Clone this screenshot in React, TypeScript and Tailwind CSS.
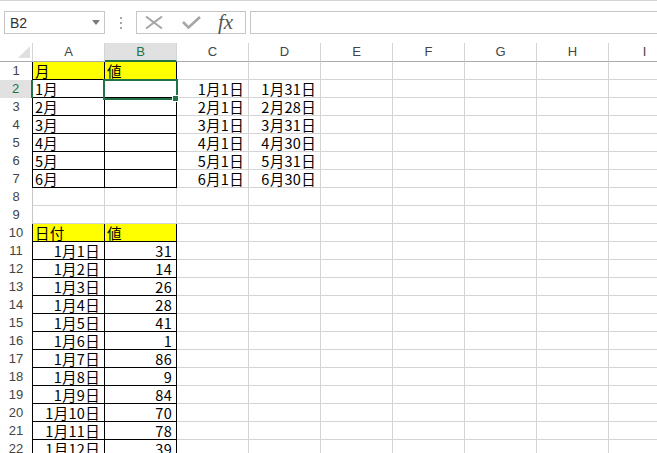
import React from "react";

const COLS = ["A", "B", "C", "D", "E", "F", "G", "H", "I"];
const ROWS = Array.from({ length: 22 }, (_, i) => i + 1);

const months = ["1月", "2月", "3月", "4月", "5月", "6月"];
const monthStart = ["1月1日", "2月1日", "3月1日", "4月1日", "5月1日", "6月1日"];
const monthEnd = ["1月31日", "2月28日", "3月31日", "4月30日", "5月31日", "6月30日"];
const values = [31, 14, 26, 28, 41, 1, 86, 9, 84, 70, 78, 39];

type Cell = { text?: string; right?: boolean; yellow?: boolean };

function isTable(r: number, c: number) {
  return c < 2 && ((r >= 1 && r <= 7) || r >= 10);
}

function getCell(r: number, c: number): Cell {
  if (r === 1 && c === 0) return { text: "月", yellow: true };
  if (r === 1 && c === 1) return { text: "値", yellow: true };
  if (r === 10 && c === 0) return { text: "日付", yellow: true };
  if (r === 10 && c === 1) return { text: "値", yellow: true };
  if (r >= 2 && r <= 7) {
    if (c === 0) return { text: months[r - 2] };
    if (c === 2) return { text: monthStart[r - 2], right: true };
    if (c === 3) return { text: monthEnd[r - 2], right: true };
  }
  if (r >= 11) {
    if (c === 0) return { text: `1月${r - 10}日`, right: true };
    if (c === 1) return { text: String(values[r - 11]), right: true };
  }
  return {};
}

function FormulaBar() {
  return (
    <div className="h-[43px] border-t border-[#d4d4d4] pt-[10px] flex items-start">
      <div className="ml-[4px] w-[101px] h-[23px] border border-[#c6c6c6] flex items-center justify-between pl-[5px] pr-[4px]">
        <span className="text-[14px] leading-none text-[#333] [font-family:'Liberation_Sans',sans-serif]">B2</span>
        <svg width="8" height="5" viewBox="0 0 8 5">
          <path d="M0 0 L8 0 L4 5 Z" fill="#7a7a7a" />
        </svg>
      </div>
      <div className="ml-[15px] mt-[6px] flex flex-col gap-[3px]">
        <div className="w-[2px] h-[2px] bg-[#a6a6a6]" />
        <div className="w-[2px] h-[2px] bg-[#a6a6a6]" />
        <div className="w-[2px] h-[2px] bg-[#a6a6a6]" />
      </div>
      <div className="ml-[14px] w-[110px] h-[23px] border border-[#c6c6c6] flex items-center">
        <svg className="ml-[8px]" width="18" height="13" viewBox="0 0 18 13">
          <path d="M1 0.5 L17 12.5 M17 0.5 L1 12.5" stroke="#a6a6a6" strokeWidth="2" />
        </svg>
        <svg className="ml-[19px]" width="19" height="13" viewBox="0 0 19 13">
          <path d="M1 6 L6.5 11.5 L18 1" stroke="#a6a6a6" strokeWidth="2.6" fill="none" />
        </svg>
        <span className="ml-[17px] text-[21px] leading-none italic text-[#555] [font-family:'Liberation_Serif',serif]">
          fx
        </span>
      </div>
      <div className="ml-[4px] flex-1 h-[23px] border-t border-b border-l border-[#c6c6c6]" />
    </div>
  );
}

function HeaderRow() {
  return (
    <>
      <div className="border-b border-r border-b-[#ababab] border-r-[#d4d4d4] flex items-end justify-end pr-[2px] pb-[3px]">
        <svg width="12" height="12" viewBox="0 0 12 12">
          <path d="M12 0 L12 12 L0 12 Z" fill="#dfdfdf" />
        </svg>
      </div>
      {COLS.map((c, i) =>
        i === 1 ? (
          <div
            key={c}
            className="bg-[#e1e1e1] border-r border-r-[#d4d4d4] border-b-2 border-b-[#217346] text-[#217346] flex items-center justify-center text-[13px]"
          >
            {c}
          </div>
        ) : (
          <div
            key={c}
            className="border-r border-r-[#d4d4d4] border-b border-b-[#ababab] text-[#444] flex items-center justify-center text-[13px]"
          >
            {c}
          </div>
        )
      )}
    </>
  );
}

function RowHeader({ r }: { r: number }) {
  if (r === 2) {
    return (
      <div className="bg-[#e1e1e1] border-r-2 border-[#217346] text-[#217346] flex items-center justify-center text-[13px]">
        {r}
      </div>
    );
  }
  const table = isTable(r, 0);
  return (
    <div
      className={
        table
          ? "border-r border-black text-[#444] flex items-center justify-center text-[13px]"
          : "border-r border-[#c6c6c6] text-[#444] flex items-center justify-center text-[13px]"
      }
    >
      {r}
    </div>
  );
}

function DataCell({ r, c }: { r: number; c: number }) {
  const cell = getCell(r, c);
  const border = isTable(r, c) ? "border-r border-b border-black" : "border-r border-b border-[#d4d4d4]";
  const bg = cell.yellow ? "bg-[#ffff00]" : "bg-white";
  const align = cell.right ? "justify-end pr-[4px]" : "justify-start pl-[2px]";
  return (
    <div
      className={`${border} ${bg} ${align} flex items-end pb-[1px] whitespace-nowrap text-[14.5px] leading-[15px] tracking-[0.3px] text-black [font-family:'Noto_Sans_CJK_JP',sans-serif]`}
    >
      {cell.text}
    </div>
  );
}

export default function App() {
  return (
    <div className="w-[657px] h-[453px] overflow-hidden bg-white [font-family:'Liberation_Sans',sans-serif]">
      <FormulaBar />
      <div className="relative w-[681px]">
        <div className="grid grid-cols-[33px_repeat(9,72px)] grid-rows-[19px_repeat(22,18px)]">
          <HeaderRow />
          {ROWS.map((r) => (
            <React.Fragment key={r}>
              <RowHeader r={r} />
              {COLS.map((_, c) => (
                <DataCell key={c} r={r} c={c} />
              ))}
            </React.Fragment>
          ))}
        </div>
        <div className="absolute left-[103px] top-[36px] w-[75px] h-[21px] border-2 border-[#217346] pointer-events-none" />
        <div className="absolute left-[172px] top-[52px] w-[7px] h-[7px] bg-[#217346] border border-white pointer-events-none" />
      </div>
    </div>
  );
}
